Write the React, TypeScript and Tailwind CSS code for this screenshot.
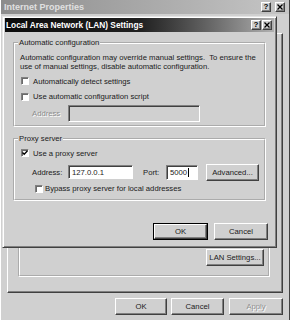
import React from "react";

const raised =
  "bg-[#d0d0d0] border border-t-white border-l-white border-r-[#404040] border-b-[#404040] shadow-[inset_-1px_-1px_0_#808080]";
const sunken =
  "border border-t-[#808080] border-l-[#808080] border-r-white border-b-white shadow-[inset_1px_1px_0_#404040]";
const sunkenLight =
  "border border-t-[#808080] border-l-[#808080] border-r-white border-b-white shadow-[inset_1px_1px_0_#6a6a6a]";

function TitleBtn({ kind }: { kind: "q" | "x" }) {
  return (
    <div className={`${raised} w-[10px] h-[10px] flex items-center justify-center`}>
      {kind === "q" ? (
        <span className="font-bold text-[8px] leading-[8px] text-black">?</span>
      ) : (
        <svg width="6" height="6" viewBox="0 0 6 6">
          <path d="M0.5 0.5 L5.5 5.5 M5.5 0.5 L0.5 5.5" stroke="#000" strokeWidth="1.3" />
        </svg>
      )}
    </div>
  );
}

function Check({ checked = false }: { checked?: boolean }) {
  return (
    <div className={`${sunkenLight} bg-white w-[8px] h-[8px] shrink-0 flex items-center justify-center`}>
      {checked && (
        <svg width="6" height="6" viewBox="0 0 6 6">
          <path d="M0.5 2.5 L2.2 4.3 L5.5 0.8" stroke="#000" strokeWidth="1.3" fill="none" />
        </svg>
      )}
    </div>
  );
}

function Button({
  children,
  w,
  disabled = false,
  def = false,
}: {
  children: React.ReactNode;
  w: string;
  disabled?: boolean;
  def?: boolean;
}) {
  const inner = (
    <div className={`${raised} ${def ? "w-full h-full" : w + " h-[17px]"} flex items-center justify-center`}>
      <span className={disabled ? "text-[#909090] [text-shadow:1px_1px_0_#fff]" : "text-[#202020]"}>{children}</span>
    </div>
  );
  if (def)
    return <div className={`${w} h-[17px] border border-black flex`}>{inner}</div>;
  return inner;
}

export default function App() {
  return (
    <div className="relative w-[290px] h-[320px] overflow-hidden bg-[#d0d0d0] font-['Liberation_Sans',Arial,sans-serif] text-[7.7px] leading-[9px] text-[#1a1a1a]">
      {/* Outer window: Internet Properties */}
      <div className="flex flex-col h-full border-l border-l-white border-r border-r-[#404040]">
        <div className="h-[14px] shrink-0 flex items-center pl-[3px] pr-[4px] bg-linear-to-r from-[#8c8c8c] to-[#c6c6c6]">
          <span className="font-bold text-[9px] text-[#e0e0e0]">Internet Properties</span>
          <div className="ml-auto flex gap-[4px]">
            <TitleBtn kind="q" />
            <TitleBtn kind="x" />
          </div>
        </div>
        <div className="ml-[6px] mt-[19px] w-[276px] h-[260px] flex flex-col justify-end pb-[15px] border border-t-white border-l-white border-r-[#404040] border-b-[#404040] shadow-[inset_-1px_-1px_0_#808080]">
          <div className="ml-[10px] w-[252px] h-[80px] flex flex-col justify-end items-end pb-[9px] pr-[4px] border-2 border-white [border-style:groove]">
            <Button w="w-[58px]">LAN Settings...</Button>
          </div>
        </div>
        <div className="mt-[5px] flex pl-[114px] gap-[4px]">
          <Button w="w-[52px]">OK</Button>
          <Button w="w-[53px]">Cancel</Button>
          <div className="ml-[1px]">
            <Button w="w-[54px]" disabled>
              Apply
            </Button>
          </div>
        </div>
      </div>

      {/* LAN Settings dialog */}
      <div className="absolute left-[2px] top-[16px] w-[275px] h-[232px] flex flex-col pt-[1px] px-[2px] bg-[#d0d0d0] border border-t-[#e4e4e4] border-l-[#e4e4e4] border-r-[#404040] border-b-[#404040] shadow-[inset_1px_1px_0_#fff,inset_-1px_-1px_0_#808080]">
        <div className="h-[14px] shrink-0 flex items-center pl-[1px] pr-[2px] bg-linear-to-r from-[#0c0c0c] via-[#202020] to-[#b0b0b0]">
          <span className="font-bold text-[8.3px] text-white">Local Area Network (LAN) Settings</span>
          <div className="ml-auto flex gap-[1px]">
            <TitleBtn kind="q" />
            <TitleBtn kind="x" />
          </div>
        </div>

        {/* Automatic configuration */}
        <fieldset className="mt-[6px] mx-[8px] px-[5px] pt-[5.5px] pb-[3px] border-2 border-white [border-style:groove]">
          <legend className="-ml-[2px] px-[1px]">Automatic configuration</legend>
          <p className="whitespace-nowrap">
            {"Automatic configuration may override manual settings.\u00a0 To ensure the"}
            <br />
            use of manual settings, disable automatic configuration.
          </p>
          <div className="h-[21px] flex items-center pl-[1px] gap-[4px]">
            <Check />
            <span>Automatically detect settings</span>
          </div>
          <div className="h-[10px] flex items-center pl-[1px] gap-[4px]">
            <Check />
            <span>Use automatic configuration script</span>
          </div>
          <div className="mt-[3.5px] h-[17px] flex items-center">
            <span className="ml-[12px] w-[36px] text-[#8c8c8c] [text-shadow:1px_1px_0_#fff]">Address</span>
            <div className={`${sunken} bg-[#d0d0d0] w-[132px] h-[17px]`} />
          </div>
        </fieldset>

        {/* Proxy server */}
        <fieldset className="mt-[7px] mx-[8px] px-[5px] pt-[4px] pb-[5px] border-2 border-white [border-style:groove]">
          <legend className="-ml-[2px] px-[1px]">Proxy server</legend>
          <div className="h-[12px] flex items-center pl-[1px] gap-[4px]">
            <Check checked />
            <span>Use a proxy server</span>
          </div>
          <div className="mt-[4.5px] h-[17px] flex items-center">
            <span className="ml-[12px] w-[36px]">Address:</span>
            <div className={`${sunken} bg-white w-[65px] h-[14px] flex items-center pl-[3px]`}>127.0.0.1</div>
            <span className="ml-[10px] w-[23px]">Port:</span>
            <div className={`${sunken} bg-white w-[32px] h-[15px] flex items-center pl-[3px]`}>
              5000
              <span className="ml-[1px] w-[1px] h-[9px] bg-black" />
            </div>
            <div className="ml-[8px]">
              <Button w="w-[53px]">Advanced...</Button>
            </div>
          </div>
          <div className="mt-[2.5px] h-[11px] flex items-center pl-[15px] gap-[2px]">
            <Check />
            <span>Bypass proxy server for local addresses</span>
          </div>
        </fieldset>

        <div className="mt-[22px] flex justify-end pr-[6px] gap-[6px]">
          <Button w="w-[55px]" def>
            OK
          </Button>
          <Button w="w-[54px]">Cancel</Button>
        </div>
      </div>
    </div>
  );
}
